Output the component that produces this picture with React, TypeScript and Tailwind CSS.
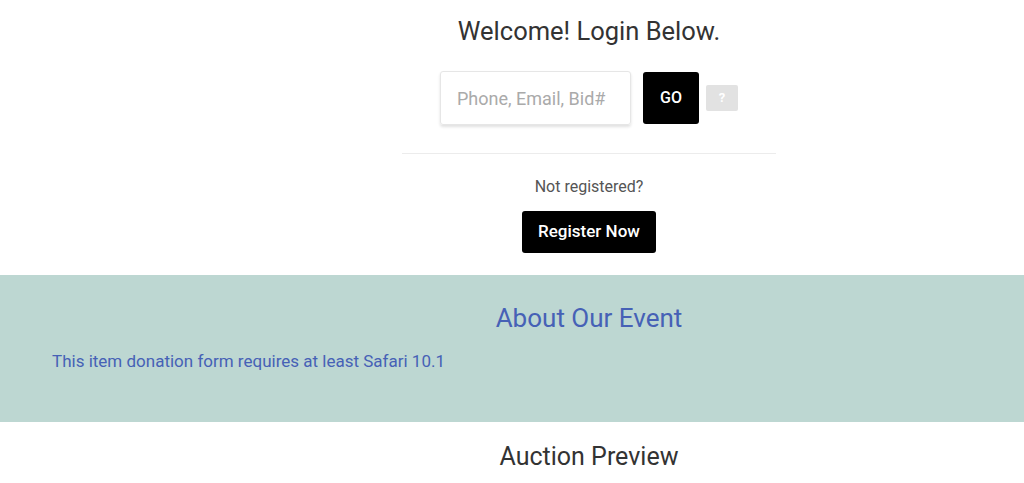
export default function App() {
  return (
    <div
      className="w-[1024px] h-[483px] overflow-hidden bg-white text-[#333]"
      style={{ fontFamily: 'Roboto, "Noto Sans", sans-serif' }}
    >
      {/* Login */}
      <div className="pl-[154px] flex flex-col items-center">
        <h1 className="mt-[15px] text-[25.5px] leading-[32px] text-[#333]">Welcome! Login Below.</h1>
        <div className="mt-[24px] flex items-center">
          <input
            className="w-[191px] h-[54px] px-[16px] rounded-[3px] border border-[#e6e6e6] shadow-[0_2px_3px_rgba(0,0,0,0.12)] text-[18px] text-[#333] placeholder:text-[#aaa] outline-none"
            placeholder="Phone, Email, Bid#"
          />
          <button className="ml-[12px] w-[56px] h-[52px] rounded-[3px] bg-black text-white text-[16px] font-medium">
            GO
          </button>
          <button className="ml-[7px] w-[32px] h-[26px] rounded-[2px] bg-[#e2e2e2] text-white text-[13px] font-bold">
            ?
          </button>
        </div>
        <hr className="mt-[28px] w-[374px] border-t border-[#ececec]" />
        <p className="mt-[24px] text-[16px] leading-[18px] text-[#555]">Not registered?</p>
        <button className="mt-[15px] w-[134px] h-[42px] rounded-[3px] bg-black text-white text-[17px] font-medium">
          Register Now
        </button>
      </div>

      {/* About */}
      <section className="mt-[22px] h-[147px] bg-[#bdd7d2]">
        <h2 className="pl-[154px] pt-[27px] text-center text-[26px] leading-[32px] text-[#4661b6]">About Our Event</h2>
        <p className="mt-[17px] px-[52px] text-[17px] leading-[20px] text-[#4661b6]">
          This item donation form requires at least Safari 10.1
        </p>
      </section>

      {/* Auction preview */}
      <h2 className="pl-[154px] mt-[19px] text-center text-[25px] leading-[32px] text-[#333]">Auction Preview</h2>
    </div>
  )
}
